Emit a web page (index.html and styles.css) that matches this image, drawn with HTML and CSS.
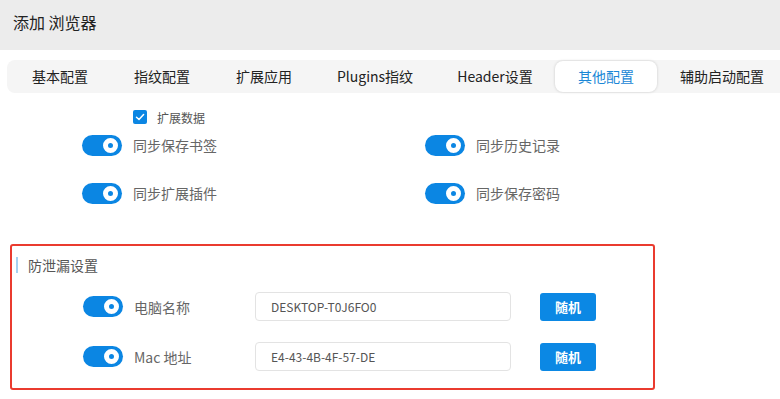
FILE: index.html
```html
<!DOCTYPE html>
<html lang="zh-CN">
<head>
    <meta charset="UTF-8">
    <meta name="viewport" content="width=device-width, initial-scale=1.0">
    <title>添加 浏览器</title>
    <link rel="stylesheet" href="styles.css">
</head>
<body>

    <div class="dialog-header">添加 浏览器</div>

    <div class="tabs">
        <div class="tab">基本配置</div>
        <div class="tab">指纹配置</div>
        <div class="tab">扩展应用</div>
        <div class="tab wide">Plugins指纹</div>
        <div class="tab wide">Header设置</div>
        <div class="tab active">其他配置</div>
        <div class="tab last">辅助启动配置</div>
    </div>

    <div class="content">
        <label class="check-row">
            <span class="checkbox">
                <svg width="10" height="10" viewBox="0 0 10 10"><path d="M1.5 5.2 L4 7.5 L8.6 2.6" fill="none" stroke="#fff" stroke-width="1.5" stroke-linecap="round" stroke-linejoin="round"/></svg>
            </span>
            扩展数据
        </label>

        <div class="sync-grid">
            <div class="sync-item"><span class="switch"></span>同步保存书签</div>
            <div class="sync-item"><span class="switch"></span>同步历史记录</div>
            <div class="sync-item"><span class="switch"></span>同步扩展插件</div>
            <div class="sync-item"><span class="switch"></span>同步保存密码</div>
        </div>

        <div class="leak-box">
            <div class="section-title">防泄漏设置</div>
            <div class="leak-row">
                <span class="switch"></span>
                <span class="leak-label">电脑名称</span>
                <input class="leak-input" type="text" value="DESKTOP-T0J6FO0">
                <button class="btn-random">随机</button>
            </div>
            <div class="leak-row">
                <span class="switch"></span>
                <span class="leak-label">Mac 地址</span>
                <input class="leak-input" type="text" value="E4-43-4B-4F-57-DE">
                <button class="btn-random">随机</button>
            </div>
        </div>
    </div>

</body>
</html>
```

FILE: styles.css
```css
body {
    margin: 0;
    font-family: "Noto Sans CJK SC", "Noto Sans", sans-serif;
    background-color: #fff;
    color: #333;
    overflow: hidden;
}

.dialog-header {
    height: 50px;
    background-color: #ececec;
    padding-left: 13px;
    font-size: 16px;
    line-height: 44px;
    color: #222;
}

.tabs {
    display: flex;
    margin: 10px 0 0 7px;
    padding-left: 2px;
    height: 33px;
    background-color: #f5f5f5;
    border-radius: 8px 0 0 8px;
    white-space: nowrap;
}

.tab {
    flex: none;
    width: 102px;
    text-align: center;
    font-size: 14px;
    line-height: 33px;
    color: #222;
}

.tab.wide {
    width: 120px;
}

.tab.last {
    width: 130px;
}

.tab.active {
    margin: 1px 0;
    line-height: 31px;
    background-color: #fff;
    border-radius: 8px;
    box-shadow: 0 0 3px rgba(0, 0, 0, 0.18);
    color: #1b87d6;
}

.content {
    padding-top: 17px;
}

.check-row {
    display: flex;
    align-items: center;
    margin-left: 133px;
    font-size: 12px;
    color: #555;
    height: 14px;
}

.checkbox {
    width: 14px;
    height: 14px;
    margin-right: 10px;
    background-color: #0b86e3;
    border-radius: 2px;
    display: flex;
    align-items: center;
    justify-content: center;
}

.sync-grid {
    display: grid;
    grid-template-columns: 343px 343px;
    row-gap: 26px;
    margin: 10px 0 0 82px;
}

.sync-item {
    display: flex;
    align-items: center;
    height: 22px;
    font-size: 14px;
    color: #666;
}

.switch {
    position: relative;
    flex: none;
    width: 40px;
    height: 21px;
    margin-right: 11px;
    background-color: #0b86e3;
    border-radius: 11px;
}

/* knob with a blue dot, sitting at the right (on) */
.switch::after {
    content: "";
    position: absolute;
    top: 3px;
    right: 4px;
    width: 5px;
    height: 5px;
    border: 5px solid #fff;
    border-radius: 50%;
    background-color: #0b86e3;
}

.leak-box {
    margin: 40px 0 0 10px;
    width: 645px;
    height: 146px;
    border: 2px solid #ea3b2f;
    border-radius: 3px;
    box-sizing: border-box;
}

.section-title {
    margin: 11px 0 0 4px;
    padding-left: 10px;
    border-left: 2px solid #a6d2f1;
    font-size: 14px;
    line-height: 16px;
    color: #555;
}

.leak-row {
    display: flex;
    align-items: center;
    margin: 19px 0 0 71px;
    height: 29px;
}

.leak-row + .leak-row {
    margin-top: 21px;
}

.leak-label {
    width: 121px;
    font-size: 14px;
    color: #666;
}

.leak-input {
    width: 256px;
    height: 29px;
    box-sizing: border-box;
    border: 1px solid #e3e3e3;
    border-radius: 4px;
    padding: 0 15px;
    font-family: inherit;
    font-size: 12px;
    color: #555;
    outline: none;
}

.btn-random {
    margin-left: 29px;
    width: 56px;
    height: 28px;
    border: none;
    border-radius: 3px;
    background-color: #0b88e4;
    color: #fff;
    font-family: inherit;
    font-size: 13px;
    font-weight: bold;
    cursor: pointer;
}
```
